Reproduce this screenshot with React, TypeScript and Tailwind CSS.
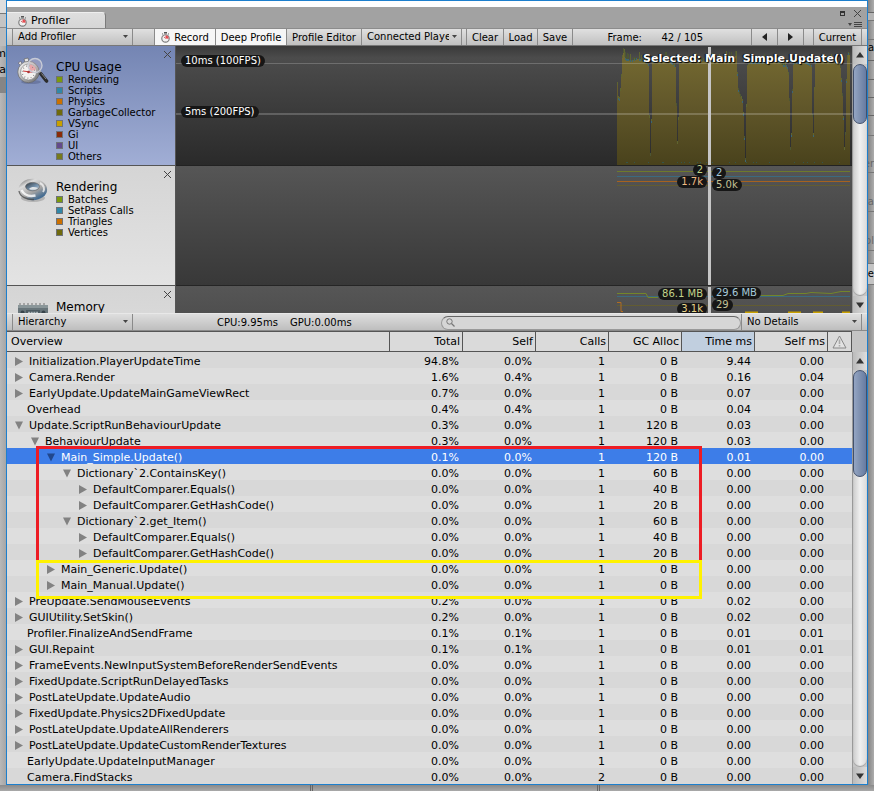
import React from "react";

type Tint = { name: string; color: string };

type Row = {
  label: string;
  level: number;
  state: "open" | "closed" | "leaf";
  values: [string, string, string, string, string, string];
  selected?: boolean;
};

const rows: Row[] = [
  { label: "Initialization.PlayerUpdateTime", level: 0, state: "closed", values: ["94.8%", "0.0%", "1", "0 B", "9.44", "0.00"] },
  { label: "Camera.Render", level: 0, state: "closed", values: ["1.6%", "0.4%", "1", "0 B", "0.16", "0.04"] },
  { label: "EarlyUpdate.UpdateMainGameViewRect", level: 0, state: "closed", values: ["0.7%", "0.0%", "1", "0 B", "0.07", "0.00"] },
  { label: "Overhead", level: 0, state: "leaf", values: ["0.4%", "0.4%", "1", "0 B", "0.04", "0.04"] },
  { label: "Update.ScriptRunBehaviourUpdate", level: 0, state: "open", values: ["0.3%", "0.0%", "1", "120 B", "0.03", "0.00"] },
  { label: "BehaviourUpdate", level: 1, state: "open", values: ["0.3%", "0.0%", "1", "120 B", "0.03", "0.00"] },
  { label: "Main_Simple.Update()", level: 2, state: "open", values: ["0.1%", "0.0%", "1", "120 B", "0.01", "0.00"], selected: true },
  { label: "Dictionary`2.ContainsKey()", level: 3, state: "open", values: ["0.0%", "0.0%", "1", "60 B", "0.00", "0.00"] },
  { label: "DefaultComparer.Equals()", level: 4, state: "closed", values: ["0.0%", "0.0%", "1", "40 B", "0.00", "0.00"] },
  { label: "DefaultComparer.GetHashCode()", level: 4, state: "closed", values: ["0.0%", "0.0%", "1", "20 B", "0.00", "0.00"] },
  { label: "Dictionary`2.get_Item()", level: 3, state: "open", values: ["0.0%", "0.0%", "1", "60 B", "0.00", "0.00"] },
  { label: "DefaultComparer.Equals()", level: 4, state: "closed", values: ["0.0%", "0.0%", "1", "40 B", "0.00", "0.00"] },
  { label: "DefaultComparer.GetHashCode()", level: 4, state: "closed", values: ["0.0%", "0.0%", "1", "20 B", "0.00", "0.00"] },
  { label: "Main_Generic.Update()", level: 2, state: "closed", values: ["0.0%", "0.0%", "1", "0 B", "0.00", "0.00"] },
  { label: "Main_Manual.Update()", level: 2, state: "closed", values: ["0.0%", "0.0%", "1", "0 B", "0.00", "0.00"] },
  { label: "PreUpdate.SendMouseEvents", level: 0, state: "closed", values: ["0.2%", "0.0%", "1", "0 B", "0.02", "0.00"] },
  { label: "GUIUtility.SetSkin()", level: 0, state: "closed", values: ["0.2%", "0.0%", "1", "0 B", "0.02", "0.00"] },
  { label: "Profiler.FinalizeAndSendFrame", level: 0, state: "leaf", values: ["0.1%", "0.1%", "1", "0 B", "0.01", "0.01"] },
  { label: "GUI.Repaint", level: 0, state: "closed", values: ["0.1%", "0.1%", "1", "0 B", "0.01", "0.01"] },
  { label: "FrameEvents.NewInputSystemBeforeRenderSendEvents", level: 0, state: "closed", values: ["0.0%", "0.0%", "1", "0 B", "0.00", "0.00"] },
  { label: "FixedUpdate.ScriptRunDelayedTasks", level: 0, state: "closed", values: ["0.0%", "0.0%", "1", "0 B", "0.00", "0.00"] },
  { label: "PostLateUpdate.UpdateAudio", level: 0, state: "closed", values: ["0.0%", "0.0%", "1", "0 B", "0.00", "0.00"] },
  { label: "FixedUpdate.Physics2DFixedUpdate", level: 0, state: "closed", values: ["0.0%", "0.0%", "1", "0 B", "0.00", "0.00"] },
  { label: "PostLateUpdate.UpdateAllRenderers", level: 0, state: "closed", values: ["0.0%", "0.0%", "1", "0 B", "0.00", "0.00"] },
  { label: "PostLateUpdate.UpdateCustomRenderTextures", level: 0, state: "closed", values: ["0.0%", "0.0%", "1", "0 B", "0.00", "0.00"] },
  { label: "EarlyUpdate.UpdateInputManager", level: 0, state: "leaf", values: ["0.0%", "0.0%", "1", "0 B", "0.00", "0.00"] },
  { label: "Camera.FindStacks", level: 0, state: "leaf", values: ["0.0%", "0.0%", "2", "0 B", "0.00", "0.00"] },
];

const headers = ["Total", "Self", "Calls", "GC Alloc", "Time ms", "Self ms"];
const indents = ["pl-2", "pl-6", "pl-10", "pl-14", "pl-[72px]"];

const cpuLegend: Tint[] = [
  { name: "Rendering", color: "bg-[#7c9a0c]" },
  { name: "Scripts", color: "bg-[#3187a8]" },
  { name: "Physics", color: "bg-[#cc7000]" },
  { name: "GarbageCollector", color: "bg-[#6f6a0c]" },
  { name: "VSync", color: "bg-[#c8a000]" },
  { name: "Gi", color: "bg-[#8a2a08]" },
  { name: "UI", color: "bg-[#634a8c]" },
  { name: "Others", color: "bg-[#767a1c]" },
];

const renderingLegend: Tint[] = [
  { name: "Batches", color: "bg-[#7c9a0c]" },
  { name: "SetPass Calls", color: "bg-[#3187a8]" },
  { name: "Triangles", color: "bg-[#cc7000]" },
  { name: "Vertices", color: "bg-[#6f6a0c]" },
];

/* Frame-time envelope: x from the first frame, y from the top of the chart. */
const envelope: [number, number][] = [
  [0, 34], [1, 52], [2, 56], [3, 48], [4, 38], [5, 14], [6, 6], [7, 10], [9, 14], [14, 15], [20, 13], [28, 16],
  [32, 20], [32.3, 72], [33, 110], [33.9, 110], [34.6, 50], [35, 16], [44, 15], [52, 14], [58.9, 22], [59.3, 60], [60, 98], [61, 98],
  [61.6, 50], [62, 16], [72, 14], [90, 15], [108, 14], [118, 12], [119, 5], [120, 22], [121, 44], [123, 50],
  [125, 54], [126, 62], [127, 84], [128, 115], [128.7, 115], [129, 78], [130, 22], [131, 17], [144, 17], [160, 15], [166, 20], [170, 20],
  [172, 34], [173, 104], [174, 104], [175, 58], [176, 18], [186, 16], [194.9, 20], [195.2, 66], [196, 108], [196.6, 72],
  [198, 17], [206, 14], [216, 15], [223, 18], [225, 44], [226, 64], [227.5, 110], [228.5, 84], [229.5, 24], [231, 8], [233, 10],
];

function heightAt(x: number) {
  for (let i = 1; i < envelope.length; i++) {
    const [x1, y1] = envelope[i];
    if (x <= x1) {
      const [x0, y0] = envelope[i - 1];
      return y0 + ((y1 - y0) * (x - x0)) / (x1 - x0);
    }
  }
  return envelope[envelope.length - 1][1];
}

function noise(i: number) {
  const v = Math.sin(i * 127.1 + 11.7) * 43758.5453;
  return v - Math.floor(v);
}

function CpuGraph() {
  const cols = Array.from({ length: 233 }, (_, x) => {
    const y = Math.round(heightAt(x + 0.3));
    const peak = y < 26 ? Math.round(noise(x) * noise(x + 500) * 11) : 3;
    return { x, y, peak };
  });
  return (
    <svg className="absolute right-0.5 bottom-0 h-[119px] w-[233px]" viewBox="0 0 233 119" shapeRendering="crispEdges" aria-hidden="true">
      <defs>
        <linearGradient id="vsync" x1="0" y1="0" x2="0" y2="119" gradientUnits="userSpaceOnUse">
          <stop offset="0" stopColor="#776c32" />
          <stop offset="0.5" stopColor="#61572a" />
          <stop offset="1" stopColor="#49421c" />
        </linearGradient>
      </defs>
      {cols.map((c) => (
        <g key={c.x}>
          <rect x={c.x} y={c.y} width="1" height={119 - c.y} fill="url(#vsync)" />
          <rect x={c.x} y={c.y - c.peak} width="1" height={c.peak} fill={noise(c.x + 90) > 0.45 ? "#5f6530" : "#4d5634"} />
          {noise(c.x + 40) > 0.45 && <rect x={c.x} y={c.y - 1} width="1" height="2" fill="#3d6672" />}
          {noise(c.x + 300) > 0.9 && <rect x={c.x} y="116" width="1" height="1" fill="#34544c" />}
        </g>
      ))}
    </svg>
  );
}

function Stopwatch() {
  return (
    <svg width="9" height="11" viewBox="0 0 9 11" aria-hidden="true">
      <rect x="3" y="0" width="3" height="1.6" fill="#555" />
      <path d="M1 2.3 2 1.6M8 2.3 7 1.6" stroke="#666" />
      <circle cx="4.5" cy="6.4" r="3.7" fill="#f2f2f2" stroke="#777" strokeWidth="1.1" />
      <path d="M4.5 6.4V3.2A3.2 3.2 0 0 1 7.6 6.8Z" fill="#e64b50" />
      <path d="M4.5 6.4 2.8 4.8" stroke="#b33" strokeWidth=".7" />
    </svg>
  );
}

function CpuIcon() {
  return (
    <svg width="32" height="28" viewBox="0 0 32 28" aria-hidden="true">
      <defs>
        <linearGradient id="case" x1="0" y1="0" x2="1" y2="1">
          <stop offset="0" stopColor="#fff" />
          <stop offset="1" stopColor="#666" />
        </linearGradient>
      </defs>
      <ellipse cx="14" cy="25" rx="10" ry="2" fill="#5c6890" opacity=".6" />
      <path d="m3 8-2-2 3-2 1 3" fill="#ddd" stroke="#667" strokeWidth=".7" />
      <path d="M8 5 7 2l4-1 1 4" fill="#e5e5e5" stroke="#666" strokeWidth=".7" />
      <circle cx="11.5" cy="15" r="10.7" fill="url(#case)" stroke="#666" strokeWidth=".7" />
      <circle cx="11.5" cy="15" r="8" fill="#f4f2f0" stroke="#888" strokeWidth=".7" />
      <path d="M11.5 15 13 7.5a8 8 0 0 1 6 5Z" fill="#e89a9d" />
      <circle cx="11.5" cy="15" r="6.2" fill="none" stroke="#666" strokeWidth="1.2" strokeDasharray=".7 2.55" />
      <path d="m6 14 11 1.500" stroke="#c62525" strokeWidth=".9" />
      <circle cx="11.5" cy="15" r="1.3" fill="#a33" />
      <circle cx="18" cy="8.500" r="7" fill="#f4d6da" fillOpacity=".2" stroke="#c7cbd6" strokeWidth="1.4" />
      <path d="m22.500 14 1.800 2.500" stroke="#aaa" strokeWidth="2" />
      <path d="m24 17 5.500 7" stroke="#2c2c2c" strokeWidth="3.600" strokeLinecap="round" />
      <path d="m24.500 16.500 4.500 5.500" stroke="#aaa" strokeWidth=".7" />
    </svg>
  );
}

function TorusIcon() {
  return (
    <svg width="32" height="26" viewBox="0 0 32 26" aria-hidden="true">
      <defs>
        <linearGradient id="torus" x1="0.1" y1="0" x2=".85" y2="1">
          <stop offset="0" stopColor="#666" />
          <stop offset=".25" stopColor="#dcdcdc" />
          <stop offset=".6" stopColor="#a2a2a2" />
          <stop offset=".85" stopColor="#4a6f92" />
          <stop offset="1" stopColor="#2f608e" />
        </linearGradient>
        <linearGradient id="hole" x1="0" y1="0" x2="1" y2="1">
          <stop offset="0" stopColor="#30363c" />
          <stop offset=".6" stopColor="#7896b2" />
          <stop offset="1" stopColor="#c8c8c8" />
        </linearGradient>
      </defs>
      <ellipse cx="16" cy="21" rx="12" ry="4" fill="#999" opacity=".6" />
      <ellipse cx="15.800" cy="12.500" rx="14.300" ry="10.700" fill="url(#torus)" />
      <path d="M2 14c1 6 8 9 15 8.500" fill="none" stroke="#444" strokeWidth="1.400" opacity=".7" />
      <path d="M4.500 13c3 6 9 6.500 14 5.500" fill="none" stroke="#fff" strokeWidth="2.400" opacity=".8" />
      <path d="M23 6c4 2 5 6 3 9" fill="none" stroke="#f2f2f2" strokeWidth="2" opacity=".8" />
      <ellipse cx="15.500" cy="9.600" rx="7" ry="4.200" fill="url(#hole)" stroke="#555" strokeWidth=".5" />
      <path d="M12 12c2-2.500 6-2.500 9-1-2 2-6 2.500-9 1" fill="#dfe3e6" />
    </svg>
  );
}

function MemoryIcon() {
  return (
    <svg width="32" height="28" viewBox="0 0 32 28" aria-hidden="true">
      <path d="M3 0v3M7 0v3M11 0v3M15 0v3M19 0v3M23 0v3M27 0v3" stroke="#999" strokeWidth="1.6" />
      <rect x="1" y="2" width="30" height="22" rx="1" fill="#68757a" />
      <rect x="1" y="2" width="30" height="3" fill="#8a9699" />
      <circle cx="5.500" cy="9.500" r="2" fill="#38444b" />
      <circle cx="26.500" cy="9.500" r="2" fill="#38444b" />
      <rect x="9" y="7" width="14" height="9" fill="#4c5a61" />
      <path d="M11 9.500h10" stroke="#a9b4b8" strokeWidth="1.500" strokeDasharray="2 .7" />
    </svg>
  );
}

function Cross() {
  return (
    <svg width="9" height="9" viewBox="0 0 9 9" aria-hidden="true">
      <path d="m1 1 7 7M8 1 1 8" stroke="#444" strokeWidth="1" />
    </svg>
  );
}

function Module({ title, icon, legend, selected }: { title: string; icon: React.ReactNode; legend: Tint[]; selected?: boolean }) {
  return (
    <section
      className={
        "relative flex h-[120px] shrink-0 border-b border-[#555] pl-2 " +
        (selected ? "bg-linear-to-b from-[#7485b3] to-[#a1aed5]" : "bg-linear-to-b from-[#d5d5d5] to-[#e3e3e3]")
      }
    >
      <div className="w-10 shrink-0 pt-[11px] pl-0.5">{icon}</div>
      <div className="pt-3.5 pl-px">
        <h2 className="text-[12px] leading-[14px]">{title}</h2>
        <ul>
          {legend.map((l) => (
            <li key={l.name} className="flex h-[11px] items-center gap-[5px] text-[10px] leading-[11px]">
              <span className={"size-[7px] border border-[#6e7277] " + l.color} />
              {l.name}
            </li>
          ))}
        </ul>
      </div>
      <button type="button" aria-label={"Remove " + title} className="absolute top-1 right-[3px]">
        <Cross />
      </button>
    </section>
  );
}

function Badge({ className, children }: { className: string; children: React.ReactNode }) {
  return (
    <span className={"absolute h-3 rounded-md bg-[#161616] px-1 text-[10px] leading-3 whitespace-nowrap " + className}>{children}</span>
  );
}

function Marker({ children }: { children?: React.ReactNode }) {
  return <div className="absolute top-px right-[141px] bottom-0 w-[3px] bg-[#c6c6c6]">{children}</div>;
}

function DropDown({ label, value, className }: { label: string; value: string; className: string }) {
  return (
    <div className={"relative flex shrink-0 border-r border-[#8a8a8a] " + className}>
      <select aria-label={label} defaultValue={value} className="w-full appearance-none overflow-hidden bg-transparent pr-3 pl-[5px] text-[10px] leading-4 outline-none">
        <option>{value}</option>
      </select>
      <svg className="pointer-events-none absolute top-1.5 right-1" width="5" height="4" viewBox="0 0 5 4" aria-hidden="true">
        <path d="M0 0h5L2.500 3Z" fill="#444" />
      </svg>
    </div>
  );
}

function ToolButton({ className, children, label, pressed }: { className: string; children: React.ReactNode; label?: string; pressed?: boolean }) {
  return (
    <button
      type="button"
      aria-label={label}
      aria-pressed={pressed}
      className={"flex shrink-0 items-center justify-center border-r border-[#8a8a8a] whitespace-nowrap " + (pressed ? "bg-[#f6f6f6] " : "") + className}
    >
      {children}
    </button>
  );
}

function ScrollBar({ thumb }: { thumb: string }) {
  return (
    <div className="flex w-[15px] shrink-0 flex-col border-l border-[#999] bg-[#c6c6c6]">
      <button type="button" aria-label="Scroll up" className="flex h-[18px] items-center justify-center bg-linear-to-r from-[#bbb] to-[#ddd]">
        <svg width="8" height="6" viewBox="0 0 8 6" aria-hidden="true">
          <path d="M0 5.500h8L4 0Z" fill="#333" />
        </svg>
      </button>
      <div className="flex-1 rounded-[7px] bg-linear-to-r from-[#ccc] via-[#f0f0f0] to-[#dadada] shadow-[inset_0_-1px_1px_#999]">
        <div className={"rounded-[7px] border border-[#42506b] bg-linear-to-r from-[#94a5c3] via-[#7e90b0] to-[#667ba2] " + thumb} />
      </div>
      <button type="button" aria-label="Scroll down" className="flex h-[17px] items-center justify-center bg-linear-to-r from-[#bbb] to-[#ddd]">
        <svg width="8" height="6" viewBox="0 0 8 6" aria-hidden="true">
          <path d="M0 .5h8L4 6Z" fill="#333" />
        </svg>
      </button>
    </div>
  );
}

function Toggle({ open, selected }: { open: boolean; selected?: boolean }) {
  return (
    <button type="button" aria-label={open ? "Collapse" : "Expand"} className="flex w-3.5 shrink-0 items-center">
      <svg width="9" height="9" viewBox="0 0 9 9" aria-hidden="true">
        <path d={open ? "M0 .5h8L4 8.500Z" : "M0 0v9l8-4.500Z"} fill={selected ? "#21478c" : "#828282"} />
      </svg>
    </button>
  );
}

function LeftEdge() {
  return (
    <div className="w-1.5 shrink-0 overflow-hidden bg-linear-to-r from-[#b8b8b8] to-[#a6a6a6] text-[11px] leading-4">
      <div className="h-[13px] bg-[#dedede]" />
      <div className="h-[14px] border-t border-[#777] bg-[#c4c4c4]" />
      <div className="h-[19px] border-t border-[#888] bg-[#bcbcbc]" />
      <div className="flex h-4 justify-end">m</div>
      <div className="flex h-[15px] justify-end">a</div>
      <div className="h-4 bg-[#858585]" />
    </div>
  );
}

function RightEdge() {
  return (
    <div className="w-1.5 shrink-0 overflow-hidden bg-linear-to-r from-[#858585] to-[#adadad] text-[10px] leading-4">
      <div className="h-3" />
      <div className="h-2 border-t border-[#666] bg-[#b5b5b5]" />
      <div className="h-5 border-y border-[#777]" />
      <div className="h-5">a</div>
      <div className="h-5 border-y border-[#666]" />
      <div className="h-[18px] border-b border-[#666]" />
      <div className="h-[18px] border-b border-[#666]" />
      <div className="h-5 border-b border-[#777]" />
      <div className="flex h-[37px] items-center justify-end border-b border-[#777] pt-5 text-[#666]">er</div>
      <div className="flex h-[39px] items-center justify-end border-b border-[#777] pt-5 text-[#666]">ua</div>
      <div className="flex h-[39px] items-center justify-end border-b border-[#777] pt-5 text-[#666]">pl</div>
      <div className="h-3" />
      <div className="flex h-[22px] items-center justify-end border-y border-[#777] bg-[#c4c4c4]">ne</div>
    </div>
  );
}

export default function App() {
  return (
    <div className="flex min-h-screen flex-col bg-[#a5a5a5] font-['DejaVu_Sans',Verdana,sans-serif] text-[10px] text-black">
      <div className="flex">
        <LeftEdge />
        <main className="min-w-0 flex-1 border border-[#1d7fcd]">
          <div className="h-1.5 bg-white" />
          <header className="flex h-[21px] items-end justify-between bg-[#a2a2a2] pr-[5px]">
            <div role="tab" aria-selected="true" className="flex h-4 w-[99px] items-center gap-1 rounded-tr-sm border-t border-r border-[#7b7b7b] border-t-[#eee] bg-linear-to-b from-[#dedede] to-[#d6d6d6] pt-px pl-[11px] text-[11px] leading-4">
              <Stopwatch />
              Profiler
            </div>
            <div className="flex h-full flex-col items-end gap-1 pt-0.5">
              <div className="flex items-center gap-2">
                <button type="button" aria-label="Maximize" className="h-[5px] w-[5px] border border-t-2 border-[#333]" />
                <button type="button" aria-label="Close">
                  <Cross />
                </button>
              </div>
              <button type="button" aria-label="Window menu">
                <svg width="14" height="5" viewBox="0 0 14 5" aria-hidden="true">
                  <path d="M0 1h4L2 4Z" fill="#444" />
                  <path d="M6 .5h8M6 2.500h8M6 4.500h8" stroke="#444" />
                </svg>
              </button>
            </div>
          </header>

          <div className="flex h-[18px] border-y border-t-[#8c8c8c] border-b-[#777] bg-linear-to-b from-[#e0e0e0] to-[#c0c0c0]">
            <DropDown label="Add profiler" value="Add Profiler" className="ml-[5px] w-[121px] border-l" />
            <div className="w-[22px] border-r border-[#8a8a8a]" />
            <ToolButton pressed className="w-[61px] gap-1">
              <Stopwatch />
              Record
            </ToolButton>
            <ToolButton pressed className="w-[71px]">Deep Profile</ToolButton>
            <ToolButton className="w-[75px]">Profile Editor</ToolButton>
            <DropDown label="Connected player" value="Connected Player" className="w-[100px]" />
            <div className="w-[5px] border-r border-[#8a8a8a]" />
            <ToolButton className="w-[37px]">Clear</ToolButton>
            <ToolButton className="w-[34px]">Load</ToolButton>
            <ToolButton className="w-[35px]">Save</ToolButton>
            <div className="flex flex-1 justify-end border-r border-[#8a8a8a] pr-12 leading-[18px] whitespace-nowrap">
              <span className="w-[54px]">Frame:</span>
              <span>42 / 105</span>
            </div>
            <ToolButton label="Previous frame" className="w-[26px]">
              <svg width="5" height="8" viewBox="0 0 5 8" aria-hidden="true">
                <path d="M5 0v8L0 4Z" fill="#222" />
              </svg>
            </ToolButton>
            <ToolButton label="Next frame" className="w-[26px]">
              <svg width="5" height="8" viewBox="0 0 5 8" aria-hidden="true">
                <path d="M0 0v8l5-4Z" fill="#222" />
              </svg>
            </ToolButton>
            <div className="w-2.5 border-r border-[#8a8a8a]" />
            <ToolButton className="mr-[5px] w-12">Current</ToolButton>
          </div>

          <div className="flex h-[267px] overflow-hidden">
            <aside className="w-[169px] shrink-0 overflow-hidden border-r border-[#555]">
              <Module selected title="CPU Usage" icon={<CpuIcon />} legend={cpuLegend} />
              <Module title="Rendering" icon={<TorusIcon />} legend={renderingLegend} />
              <Module title="Memory" icon={<div className="pt-1.5"><MemoryIcon /></div>} legend={[]} />
            </aside>

            <div className="min-w-0 flex-1 overflow-hidden">
              <div className="relative h-[120px] border-b border-[#222] bg-linear-to-b from-[#3a3a3a] via-[#4c4c4c] via-10% to-[#2a2a2a]">
                <CpuGraph />
                <div className="absolute inset-x-0 top-[17px] h-px bg-white/20" />
                <div className="absolute inset-x-0 top-[67px] h-0.5 bg-white/20" />
                <Badge className="top-[9px] left-[5px] text-white">10ms (100FPS)</Badge>
                <Badge className="top-[60px] left-[5px] text-white">5ms (200FPS)</Badge>
                <Marker />
                <div className="absolute top-1.5 right-2 text-[11px] leading-[14px] font-bold whitespace-pre text-white [text-shadow:1px_1px_1px_#000,-1px_0_1px_#000]">
                  Selected: Main  Simple.Update()
                </div>
              </div>

              <div className="relative h-[120px] border-b border-[#252525] bg-linear-to-b from-[#565656] to-[#383838]">
                <svg className="absolute top-0 right-0.5" width="233" height="24" viewBox="0 0 233 24" shapeRendering="crispEdges" aria-hidden="true">
                  <path d="M0 5.500h233" stroke="#6e7a2b" />
                  <path d="M0 10.500h233" stroke="#3b6a7f" />
                  <path d="M0 15.500h233" stroke="#a6621f" />
                  <path d="M0 19.500h233" stroke="#625c32" />
                </svg>
                <Marker>
                  <Badge className="-top-[3px] right-full mr-px text-[#c3d38b]">2</Badge>
                  <Badge className="top-[9px] right-full mr-px text-[#efb983]">1.7k</Badge>
                  <Badge className="top-0 left-full ml-px text-[#a5c9da]">2</Badge>
                  <Badge className="top-3 left-full ml-px text-[#c5c296]">5.0k</Badge>
                </Marker>
              </div>

              <div className="relative h-[120px] bg-linear-to-b from-[#565656] to-[#383838]">
                <svg className="absolute top-0 right-0.5" width="233" height="27" viewBox="0 0 233 27" aria-hidden="true">
                  <path d="M0 19.500h233" stroke="#625c32" />
                  <path d="M0 10.500h233" stroke="#3b6a7f" />
                  <path d="M0 7.500h29l2 4h10M144 9.500h22l5-2h18l5-1 20 1 10-2h9" fill="none" stroke="#73852a" />
                  <path d="M0 16.500h4v9h2" fill="none" stroke="#b06c20" />
                  <path d="M128 26.500h13M171 26.500h13M196 26.500h10M225 26.500h8" stroke="#c8a000" strokeWidth="2" />
                </svg>
                <Marker>
                  <Badge className="top-px right-full mr-px text-[#c3d38b]">86.1 MB</Badge>
                  <Badge className="top-4 right-full mr-px text-[#ead58a]">3.1k</Badge>
                  <Badge className="top-0 left-full ml-px text-[#a5c9da]">29.6 MB</Badge>
                  <Badge className="top-3 left-full ml-px text-[#c5c296]">29</Badge>
                </Marker>
              </div>
            </div>
            <ScrollBar thumb="h-[60px]" />
          </div>

          <div className="flex h-[18px] items-stretch border-t border-b border-t-[#e8e8e8] border-b-[#8a8a8a] bg-linear-to-b from-[#dedede] to-[#bebebe]">
            <DropDown label="View" value="Hierarchy" className="ml-[5px] w-[121px] border-l" />
            <div className="flex flex-1 gap-3 pl-[84px] leading-[18px] whitespace-nowrap">
              <span>CPU:9.95ms</span>
              <span>GPU:0.00ms</span>
            </div>
            <div className="relative my-px w-[300px]">
              <input type="search" aria-label="Search" className="h-full w-full appearance-none rounded-full border border-[#999] border-t-[#666] bg-[#d6d6d6] pl-4 outline-none" />
              <svg className="absolute top-[3px] left-[5px]" width="9" height="9" viewBox="0 0 9 9" fill="none" stroke="#777" aria-hidden="true">
                <circle cx="3.500" cy="3.500" r="2.700" />
                <path d="m5.500 5.500 3 3" strokeWidth="1.300" />
              </svg>
            </div>
            <DropDown label="Details" value="No Details" className="mr-[5px] w-[121px] border-l" />
          </div>

          <div className="flex">
            <div className="relative min-w-0 flex-1">
              <table className="w-full table-fixed border-separate border-spacing-0 text-[11px]">
                <colgroup>
                  <col />
                  <col className="w-[73px]" />
                  <col className="w-[73px]" />
                  <col className="w-[73px]" />
                  <col className="w-[73px]" />
                  <col className="w-[73px]" />
                  <col className="w-[73px]" />
                  <col className="w-6" />
                </colgroup>
                <thead className="leading-4">
                  <tr className="h-[21px] bg-[#dadada]">
                    <th className="border-y border-r border-[#555] p-0 pt-px pl-1 text-left font-normal">Overview</th>
                    {headers.map((h) => (
                      <th key={h} className={"border-y border-r border-[#555] p-0 pt-px pr-0.5 text-right font-normal " + (h === "Time ms" ? "bg-[#c1cfdf]" : "")}>
                        {h}
                      </th>
                    ))}
                    <th className="border-y border-r border-[#555] p-0">
                      <svg className="mx-auto" width="15" height="14" viewBox="0 0 15 14" role="img" aria-label="Warnings">
                        <path d="M7.500 1 14 13H1Z" fill="#e2e2e2" stroke="#888" strokeLinejoin="round" />
                        <path d="M7.500 4.500v4.500M7.500 10v1.500" stroke="#aaa" strokeWidth="1.600" />
                      </svg>
                    </th>
                  </tr>
                </thead>
                <tbody className="leading-3">
                  {rows.map((r, i) => (
                    <tr key={i} className={"h-4 " + (r.selected ? "bg-[#3d7de8] text-white" : i % 2 === 0 ? "bg-[#d8d8d8]" : "bg-[#dedede]")}>
                      <td className="p-0 pt-[3px]">
                        <div className={"flex h-[13px] whitespace-nowrap " + indents[r.level]}>
                          {r.state === "leaf" ? <span className="w-3 shrink-0" /> : <Toggle open={r.state === "open"} selected={r.selected} />}
                          <span className="pt-px">{r.label}</span>
                        </div>
                      </td>
                      {r.values.map((v, k) => (
                        <td key={k} className="p-0 pt-1 pr-1 text-right">
                          {v}
                        </td>
                      ))}
                      <td className="p-0" />
                    </tr>
                  ))}
                </tbody>
              </table>
              <div className="pointer-events-none absolute top-[115px] right-[150px] left-[29px] h-[114px] border-3 border-b-0 border-[#ed1c24]" />
              <div className="pointer-events-none absolute top-[229px] right-[150px] left-[29px] h-[39px] border-3 border-[#fff200]" />
            </div>
            <div className="flex flex-col bg-[#c3c3c3] pt-[21px]">
              <div className="flex flex-1">
                <ScrollBar thumb="h-[107px]" />
              </div>
            </div>
          </div>
        </main>
        <RightEdge />
      </div>
      <div className="flex min-h-1.5 flex-1 gap-[284px] bg-linear-to-b from-[#8a8a8a] to-[#a9a9a9] pl-[310px]">
        <div className="w-[3px] border-x border-[#666]" />
        <div className="w-[3px] border-x border-[#666]" />
      </div>
    </div>
  );
}
